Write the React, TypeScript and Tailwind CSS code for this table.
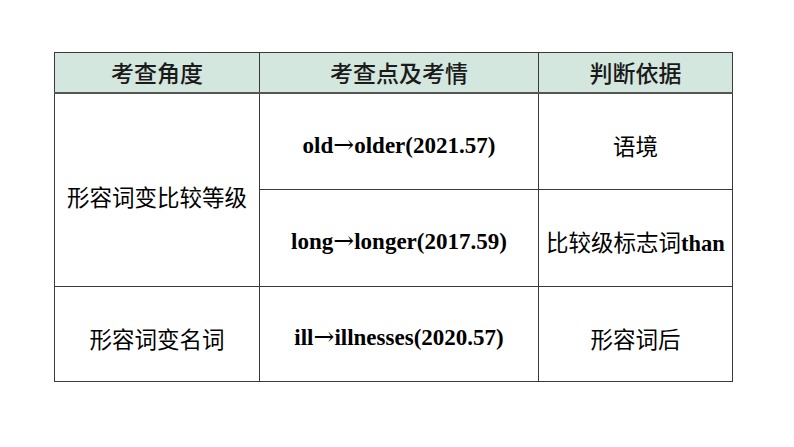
const cjk = '"Noto Sans CJK SC", "Liberation Sans", sans-serif';
const en = '"Liberation Serif", "Noto Sans CJK SC", serif';

const cell = 'border border-[#3a3a3a] text-center align-middle p-0';
const enCell = `${cell} pt-[9px] font-bold text-[23px] whitespace-nowrap`;

function Arrow() {
  return (
    <span className="font-normal text-[25px] leading-none" style={{ fontFamily: '"DejaVu Serif", serif' }}>
      →
    </span>
  );
}

export default function App() {
  return (
    <div className="w-[794px] h-[447px] bg-white pt-[52px] pl-[54px]">
      <table className="border-collapse table-fixed w-[678px] text-black" style={{ fontFamily: cjk }}>
        <colgroup>
          <col className="w-[205px]" />
          <col className="w-[279px]" />
          <col className="w-[194px]" />
        </colgroup>
        <thead>
          <tr className="h-[40px] bg-[#d4e7de] text-[23px] text-[#1a1a1a]">
            <th className={`${cell} border-b-2 border-b-[#555] font-medium`}>考查角度</th>
            <th className={`${cell} border-b-2 border-b-[#555] font-medium`}>考查点及考情</th>
            <th className={`${cell} border-b-2 border-b-[#555] font-medium`}>判断依据</th>
          </tr>
        </thead>
        <tbody className="text-[22.5px]">
          <tr className="h-[97px]">
            <td rowSpan={2} className={`${cell} pt-[14px]`}>形容词变比较等级</td>
            <td className={enCell} style={{ fontFamily: en }}>
              old<Arrow />older(2021.57)
            </td>
            <td className={`${cell} pt-[9px]`}>语境</td>
          </tr>
          <tr className="h-[97px]">
            <td className={enCell} style={{ fontFamily: en }}>
              long<Arrow />longer(2017.59)
            </td>
            <td className={`${cell} pt-[9px] whitespace-nowrap`}>
              比较级标志词<span className="font-bold" style={{ fontFamily: en }}>than</span>
            </td>
          </tr>
          <tr className="h-[95px]">
            <td className={`${cell} pt-[9px]`}>形容词变名词</td>
            <td className={enCell} style={{ fontFamily: en }}>
              ill<Arrow />illnesses(2020.57)
            </td>
            <td className={`${cell} pt-[9px]`}>形容词后</td>
          </tr>
        </tbody>
      </table>
    </div>
  );
}
